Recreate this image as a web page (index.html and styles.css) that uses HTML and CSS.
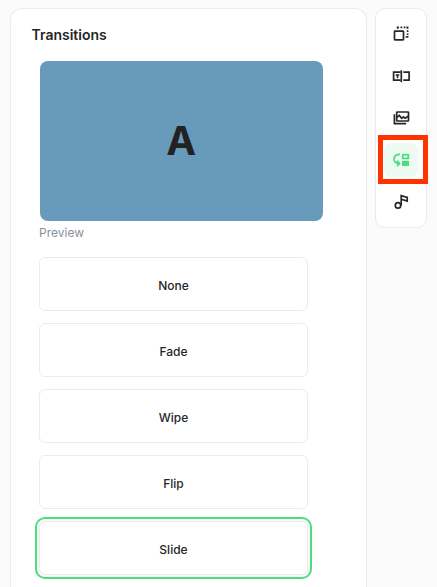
FILE: index.html
```html
<!DOCTYPE html>
<html lang="en">

<head>
    <meta charset="UTF-8">
    <meta name="viewport" content="width=device-width, initial-scale=1.0">
    <title>Transitions</title>
    <link rel="stylesheet" href="styles.css">
</head>

<body>
    <main class="panel">
        <h2 class="panel-title">Transitions</h2>
        <div class="preview">A</div>
        <p class="preview-label">Preview</p>
        <div class="options">
            <button type="button" class="option">None</button>
            <button type="button" class="option">Fade</button>
            <button type="button" class="option">Wipe</button>
            <button type="button" class="option">Flip</button>
            <button type="button" class="option selected">Slide</button>
        </div>
    </main>

    <nav class="toolbar">
        <button type="button" class="tool" aria-label="Size">
            <svg viewBox="0 0 20 20">
                <rect x="3.5" y="7.2" width="9" height="8.6" rx="0.5" />
                <path d="M6.6 4.8V3.4h1.3M9.5 3.4h1.7M12.7 3.4h1.7M15.4 3.4h1.2v1.4M16.6 6.2v1.8M16.6 9.4v1.6M16.6 12v1h-2" />
            </svg>
        </button>
        <button type="button" class="tool" aria-label="Text">
            <svg viewBox="0 0 20 20">
                <path d="M9.3 6.2H2.6v7.9h6.7M12.3 6.2h5.8v7.9h-5.8M10.3 4.2v12" />
                <path class="thin" d="M4.7 8.9h3.6M6.5 8.9v3.4" />
            </svg>
        </button>
        <button type="button" class="tool" aria-label="Images">
            <svg viewBox="0 0 20 20">
                <rect x="5.7" y="4" width="11.8" height="9" rx="0.6" />
                <path d="M3.4 6.3v9.3h11.8M5.8 9.5l2.5-2.1 2.4 3 1.8-1.5 1.6 1.4 3.2-2.1" />
            </svg>
        </button>
        <button type="button" class="tool active" aria-label="Transitions">
            <svg viewBox="0 0 20 20">
                <path d="M9 4.3C5.2 4.3 3 6 3 8.9c0 2.7 1.7 4.3 4.9 4.5M6 10.6l2.6 2.9-2.6 2.6" />
                <rect x="11.7" y="4.7" width="5.6" height="3.7" />
                <rect class="solid" x="11" y="10.8" width="7" height="5.2" />
            </svg>
        </button>
        <button type="button" class="tool" aria-label="Music">
            <svg viewBox="0 0 20 20">
                <circle cx="7" cy="13.4" r="2.7" />
                <path d="M10.2 13.5V3.7l6 1.7v3.7l-5.8-1.8" />
            </svg>
        </button>
    </nav>
</body>

</html>
```
FILE: styles.css
```css
* {
    box-sizing: border-box;
}

body {
    margin: 0;
    padding: 8px 10px 0;
    height: 100vh;
    overflow: hidden;
    display: flex;
    align-items: flex-start;
    gap: 8px;
    background-color: #fbfbfb;
    color: #262626;
    font-family: Inter, sans-serif;
}

button {
    font-family: inherit;
    color: inherit;
    cursor: pointer;
}

.panel {
    flex: none;
    width: 357px;
    height: 100%;
    padding: 17px 28px 0;
    background-color: #fff;
    border: 1px solid #ebebeb;
    border-bottom: none;
    border-radius: 12px 12px 0 0;
}

.panel-title {
    margin: 0 0 17px -7.5px;
    font-size: 14px;
    font-weight: 600;
    line-height: 18px;
}

.preview {
    display: flex;
    justify-content: center;
    align-items: center;
    width: 283.5px;
    height: 160px;
    margin-left: 0.5px;
    padding-bottom: 2px;
    border-radius: 8px;
    background-color: #679abb;
    color: #222;
    font-size: 40px;
    font-weight: 700;
}

.preview-label {
    margin: 4px 0 16px;
    color: #87919c;
    font-size: 12px;
    line-height: 16px;
}

.options {
    display: flex;
    flex-direction: column;
    gap: 12px;
    width: 269px;
}

.option {
    height: 54px;
    padding: 3px 0 0;
    background-color: #fff;
    border: 1px solid #ebebeb;
    border-radius: 6px;
    font-size: 12px;
    font-weight: 500;
}

.option.selected {
    outline: 2px solid #4ade80;
    outline-offset: 2px;
    box-shadow: 0 0 0 2px #fafafa;
}

.toolbar {
    flex: none;
    display: flex;
    flex-direction: column;
    align-items: center;
    gap: 8px;
    width: 52px;
    height: 220px;
    padding-top: 8px;
    background-color: #fff;
    border: 1px solid #ebebeb;
    border-radius: 10px;
}

.tool {
    display: flex;
    justify-content: center;
    align-items: center;
    width: 34px;
    height: 34px;
    padding: 0;
    border: none;
    border-radius: 7px;
    background: none;
}

.tool svg {
    width: 20px;
    height: 20px;
    fill: none;
    stroke: currentColor;
    stroke-width: 1.7;
}

.tool .thin {
    stroke-width: 1.5;
}

.tool.active {
    position: relative;
    background-color: #edfaf2;
    color: #4ade80;
}

/* red marker around the current tool */
.tool.active::after {
    content: '';
    position: absolute;
    inset: -8px -9.5px -7px -6.5px;
    border: 5px solid #ff3300;
}

.tool .solid {
    fill: currentColor;
    stroke: none;
}
```
